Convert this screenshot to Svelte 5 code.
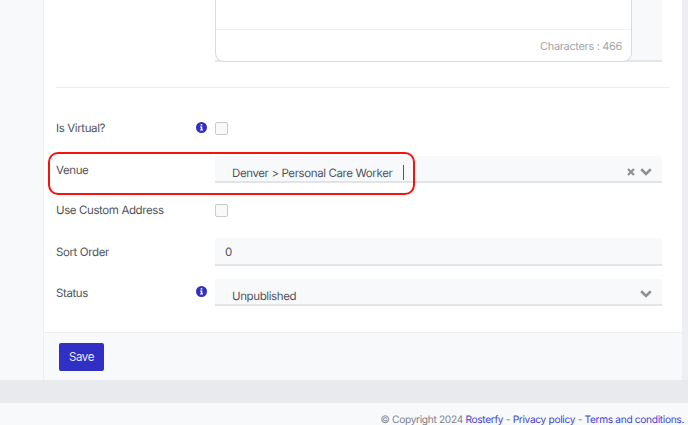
<script>
  const rows = [
    { label: 'Is Virtual?', info: true, kind: 'check' },
    { label: 'Venue', kind: 'venue', value: 'Denver > Personal Care Worker' },
    { label: 'Use Custom Address', kind: 'check' },
    { label: 'Sort Order', kind: 'number', value: '0' },
    { label: 'Status', info: true, kind: 'select', value: 'Unpublished' }
  ];
</script>

{#snippet chevron()}
  <svg class="chevron" width="12" height="8" viewBox="0 0 12 8" aria-hidden="true">
    <path d="M1.2 1.3 6 6 10.8 1.3" fill="none" stroke="#8f9094" stroke-width="2.6" />
  </svg>
{/snippet}

<div class="page">
  <main class="card">
    <div class="form">
      <div class="editor-row">
        <div class="editor">
          <div class="editor-body"></div>
          <div class="editor-foot">Characters : 466</div>
        </div>
      </div>
      <hr />
      <div class="rows">
        {#each rows as row}
          <div class="row">
            <div class="label" class:raised={row.kind === 'check'}>
              <span>{row.label}</span>
              {#if row.info}
                <svg class="info" width="11" height="11" viewBox="0 0 11 11" aria-hidden="true">
                  <circle cx="5.5" cy="5.5" r="5.5" fill="#3030c4" />
                  <rect x="4.7" y="2.1" width="1.6" height="1.5" fill="#fff" />
                  <path d="M4.1 4.5h2.2v3h.7v1H4.1v-1h.7v-2h-.7z" fill="#fff" />
                </svg>
              {/if}
            </div>
            {#if row.kind === 'check'}
              <div class="check-wrap"><span class="check"></span></div>
            {:else if row.kind === 'number'}
              <div class="input number">{row.value}</div>
            {:else}
              <div class="input select">
                <span class="value">{row.value}</span>
                {#if row.kind === 'venue'}<span class="caret"></span>{/if}
                <span class="tools">
                  {#if row.kind === 'venue'}
                    <svg class="clear" width="8" height="8" viewBox="0 0 8 8" aria-hidden="true">
                      <path d="M1 1 7 7M7 1 1 7" stroke="#8f9094" stroke-width="2.2" />
                    </svg>
                  {/if}
                  {@render chevron()}
                </span>
              </div>
            {/if}
          </div>
        {/each}
      </div>
    </div>
    <div class="card-foot"><button type="button">Save</button></div>
  </main>
  <div class="band"></div>
  <footer>
    © Copyright 2024 <a href="#r">Rosterfy</a> - <a href="#p">Privacy policy</a> - <a href="#t">Terms and conditions.</a>
  </footer>
  <div class="highlight"></div>
</div>

<style>
  :global(body) {
    margin: 0;
    background: #f8f9fb;
  }
  .page {
    position: relative;
    width: 688px;
    height: 425px;
    overflow: hidden;
    font-family: Inter, "Liberation Sans", sans-serif;
    font-size: 11.5px;
    letter-spacing: -0.39px;
    text-rendering: geometricPrecision;
    color: #505359;
    background: #f8f9fb;
  }
  .card {
    height: 380px;
    margin-left: 43px;
    box-sizing: border-box;
    display: flex;
    flex-direction: column;
    border-left: 1px solid #eeeff2;
    border-right: 6px solid #eeeff2;
    background: #fff;
  }
  .form {
    flex: 1;
    padding-left: 12px;
    padding-right: 20px;
  }
  .editor-row {
    height: 62px;
    margin-left: 159px;
    background: #f8f9fb;
    border-bottom: 2px solid #e3e5e9;
    box-sizing: border-box;
  }
  .editor {
    width: 417px;
    height: 62px;
    box-sizing: border-box;
    display: flex;
    flex-direction: column;
    background: #fff;
    border: 1px solid #d8dade;
    border-top: 0;
    border-radius: 0 0 9px 9px;
  }
  .editor-body {
    height: 29px;
    border-bottom: 1px solid #f1f2f4;
  }
  .editor-foot {
    flex: 1;
    display: flex;
    align-items: center;
    justify-content: flex-end;
    padding-right: 9px;
    font-size: 11px;
    letter-spacing: -0.33px;
    color: #a3a5a9;
  }
  hr {
    height: 1px;
    margin: 25px -7px 27px 0;
    border: 0;
    background: #eceef0;
  }
  .rows {
    display: flex;
    flex-direction: column;
    gap: 14px;
  }
  .row {
    display: grid;
    grid-template-columns: 159px 1fr;
    height: 27px;
  }
  .label {
    display: flex;
    align-items: center;
    justify-content: space-between;
    padding-right: 8px;
    box-sizing: border-box;
  }
  .label.raised {
    padding-bottom: 2px;
  }
  .info {
    margin-top: -2px;
  }
  .raised .info {
    margin-top: 0;
  }
  .check-wrap {
    display: flex;
    align-items: center;
  }
  .check {
    width: 13px;
    height: 13px;
    box-sizing: border-box;
    background: #f8f9fb;
    border: 1px solid #c9cbd0;
    border-radius: 2px;
  }
  .input {
    position: relative;
    display: flex;
    align-items: center;
    box-sizing: border-box;
    height: 27px;
    background: #f8f9fb;
    border-bottom: 2px solid #e2e4e8;
  }
  .number {
    padding-left: 10px;
    padding-top: 1px;
    height: 28px;
  }
  .select {
    padding-left: 17px;
    padding-top: 9px;
  }
  .caret {
    position: absolute;
    left: 188px;
    top: 9px;
    width: 1px;
    height: 15px;
    background: #55585e;
  }
  .tools {
    position: absolute;
    right: 10px;
    top: 11px;
    display: flex;
    align-items: center;
    gap: 5px;
  }
  .clear {
    margin-top: 1px;
  }
  .chevron {
    display: block;
  }
  .card-foot {
    height: 48px;
    box-sizing: border-box;
    padding: 10px 15px;
    background: #f8f9fb;
    border-top: 1px solid #eceef0;
  }
  button {
    display: block;
    width: 45px;
    height: 28px;
    padding: 0;
    border: 0;
    border-radius: 2px;
    background: #3030c4;
    color: #e8e8fb;
    font: inherit;
    letter-spacing: inherit;
  }
  .band {
    height: 23px;
    background: #e9eaee;
  }
  footer {
    height: 22px;
    padding: 9px 4px 0 0;
    box-sizing: border-box;
    text-align: right;
    font-size: 10.2px;
    line-height: 16px;
    letter-spacing: -0.34px;
    color: #808287;
    white-space: nowrap;
  }
  a {
    color: #4545cf;
    text-decoration: none;
  }
  .highlight {
    position: absolute;
    left: 48px;
    top: 152px;
    width: 367px;
    height: 43px;
    box-sizing: border-box;
    border: 2px solid #f3150c;
    border-radius: 10px;
    pointer-events: none;
  }
</style>
